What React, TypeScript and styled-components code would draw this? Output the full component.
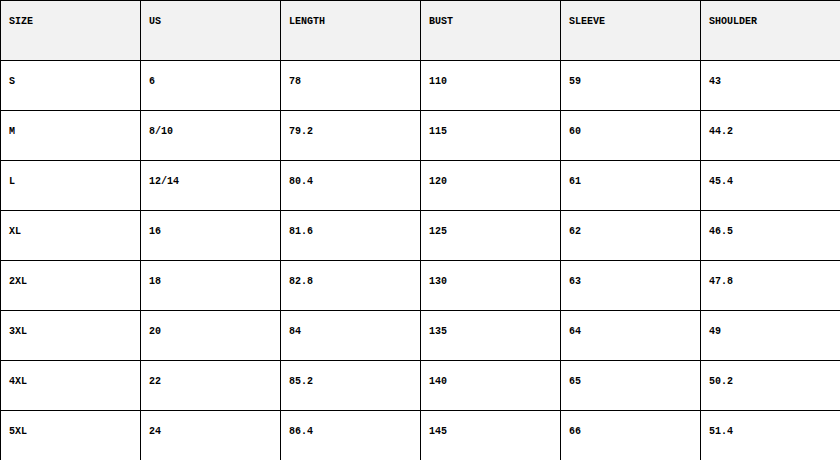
import React from 'react';
import styled, { createGlobalStyle } from 'styled-components';

const GlobalStyle = createGlobalStyle`
  body {
    margin: 0;
    background: #fff;
    overflow: hidden;
  }
`;

const Grid = styled.div`
  display: grid;
  grid-template-columns: repeat(6, 140px);
  width: 840px;
  border-top: 1px solid #000;
  border-left: 1px solid #000;
  font-family: 'Liberation Mono', 'Courier New', monospace;
  font-size: 10px;
  font-weight: 700;
  color: #000;
  text-transform: uppercase;
`;

const Cell = styled.div<{ head?: boolean }>`
  box-sizing: border-box;
  height: ${(props) => (props.head ? '60px' : '50px')};
  padding: 15px 8px 0;
  background: ${(props) => (props.head ? '#f2f2f2' : '#fff')};
  border-right: 1px solid #000;
  border-bottom: 1px solid #000;
  line-height: normal;
`;

const columns = ['Size', 'US', 'Length', 'Bust', 'Sleeve', 'Shoulder'];

const rows = [
  ['S', '6', '78', '110', '59', '43'],
  ['M', '8/10', '79.2', '115', '60', '44.2'],
  ['L', '12/14', '80.4', '120', '61', '45.4'],
  ['XL', '16', '81.6', '125', '62', '46.5'],
  ['2XL', '18', '82.8', '130', '63', '47.8'],
  ['3XL', '20', '84', '135', '64', '49'],
  ['4XL', '22', '85.2', '140', '65', '50.2'],
  ['5XL', '24', '86.4', '145', '66', '51.4'],
];

export default function App(): React.ReactElement {
  return (
    <>
      <GlobalStyle />
      <Grid>
        {columns.map((c) => (
          <Cell head key={c}>
            {c}
          </Cell>
        ))}
        {rows.map((row) =>
          row.map((v, i) => <Cell key={row[0] + i}>{v}</Cell>),
        )}
      </Grid>
    </>
  );
}
